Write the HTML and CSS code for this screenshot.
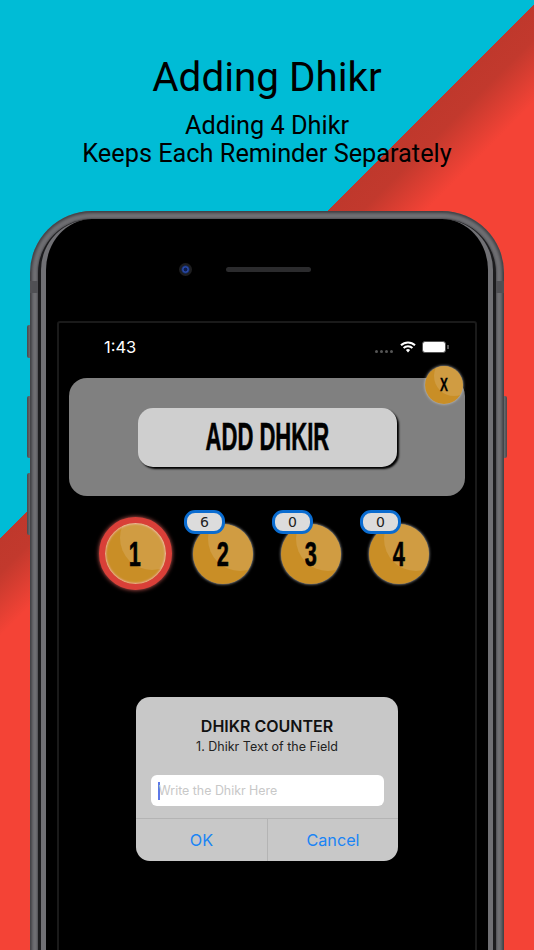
FILE: index.html
```html
<!DOCTYPE html>
<html lang="en">
<head>
<meta charset="utf-8">
<title>Adding Dhikr</title>
<link rel="stylesheet" href="styles.css">
</head>
<body>
<div class="page">
  <header class="hero">
    <h1 class="hero-title">Adding Dhikr</h1>
    <p class="hero-sub">Adding 4 Dhikr<br>Keeps Each Reminder Separately</p>
  </header>
  <div class="phone">
    <span class="side side-l1"></span>
    <span class="side side-l2"></span>
    <span class="side side-l3"></span>
    <span class="side side-r1"></span>
    <span class="band band-l"></span>
    <span class="band band-r"></span>
    <div class="phone-gap">
      <div class="phone-face">
        <div class="ear">
          <span class="camera"></span>
          <span class="speaker"></span>
        </div>
        <div class="screen">
          <div class="status">
            <span class="time">1:43</span>
            <div class="status-icons">
              <span class="dots"><i></i><i></i><i></i><i></i></span>
              <svg class="wifi" viewBox="0 0 16 12" aria-hidden="true">
                <path d="M1 4.3A10 10 0 0 1 15 4.3" />
                <path d="M3.6 7A6.3 6.3 0 0 1 12.4 7" />
                <path class="wifi-dot" d="M5.9 9.1A3 3 0 0 1 10.1 9.1L8 11.6Z" />
              </svg>
              <span class="battery"></span>
            </div>
          </div>
          <section class="panel">
            <button class="add-btn"><span class="condensed">ADD DHKIR</span></button>
            <div class="coin coin-x"><span class="condensed">X</span></div>
          </section>
          <div class="coins">
            <div class="coin coin-active"><span class="condensed">1</span></div>
            <div class="coin-wrap"><span class="badge">6</span><div class="coin"><span class="condensed">2</span></div></div>
            <div class="coin-wrap"><span class="badge">0</span><div class="coin"><span class="condensed">3</span></div></div>
            <div class="coin-wrap"><span class="badge">0</span><div class="coin"><span class="condensed">4</span></div></div>
          </div>
          <div class="dialog">
            <div class="dialog-title">DHIKR COUNTER</div>
            <div class="dialog-msg">1. Dhikr Text of the Field</div>
            <div class="field"><span class="caret"></span><span class="placeholder">Write the Dhikr Here</span></div>
            <div class="dialog-actions">
              <span class="action">OK</span>
              <span class="action">Cancel</span>
            </div>
          </div>
        </div>
      </div>
    </div>
  </div>
</div>
</body>
</html>
```
FILE: styles.css
```css
* { box-sizing: border-box; }
html, body { margin: 0; padding: 0; height: 950px; overflow: hidden; }
.page {
  width: 534px;
  height: 950px;
  overflow: hidden;
  background: linear-gradient(135deg, #00bcd6 0, #00bcd6 381px, #bf382c 381px, #c2392d 405px, #f44336 450px);
  font-family: Roboto, "Liberation Sans", sans-serif;
}
.hero { height: 211px; padding-top: 53px; text-align: center; color: #000; }
.hero-title { margin: 0; font-size: 40.4px; line-height: 50px; font-weight: 400; }
.hero-sub { margin: 9px 0 0; font-size: 25.3px; line-height: 28px; }

.phone {
  position: relative;
  width: 474px;
  height: 800px;
  margin-left: 30px;
  padding: 8px 8px 0;
  border-radius: 62px 62px 0 0;
  background: #707074;
  box-shadow: inset 0 0 3px 2px #3e3e42;
}
.side { position: absolute; width: 3px; background: linear-gradient(90deg, #47474b, #6c6c70); }
.side-l1 { left: -3px; top: 114px; height: 33px; border-radius: 2px 0 0 2px; }
.side-l2 { left: -3px; top: 185px; height: 62px; border-radius: 2px 0 0 2px; }
.side-l3 { left: -3px; top: 262px; height: 62px; border-radius: 2px 0 0 2px; }
.side-r1 { right: -3px; top: 185px; height: 62px; border-radius: 0 2px 2px 0; background: linear-gradient(90deg, #6c6c70, #47474b); }
.band { position: absolute; top: 70px; width: 8px; height: 12px; background: #505054; }
.band-l { left: 0; }
.band-r { right: 0; }

.phone-gap {
  height: 100%;
  padding: 0 3px;
  border-radius: 54px 54px 0 0;
  background: #1c1c1e;
  box-shadow: 0 0 2px 1px #505054;
}
.phone-face {
  height: 100%;
  border: solid #707074;
  border-width: 0 5px;
  border-radius: 51px 51px 0 0;
  background: #000;
}
.ear {
  height: 102px;
  display: flex;
  align-items: center;
  gap: 34px;
  padding: 0 0 1px 133px;
}
.camera {
  width: 13px;
  height: 13px;
  border-radius: 50%;
  background: radial-gradient(circle, #0d1d4a 0 1.5px, #2f52bd 2.5px, #14264f 4px, #1e1e20 4.5px);
}
.speaker { width: 85px; height: 5px; border-radius: 3px; background: #2b2b2d; }

.screen {
  width: 420px;
  height: 640px;
  margin-left: 11px;
  border: 2px solid #1a1a1a;
  border-radius: 3px;
  background: #000;
}
.status {
  height: 55px;
  display: flex;
  justify-content: space-between;
  align-items: flex-start;
  padding: 14px 29px 0 45px;
}
.time { color: #fff; font: 400 16.5px/20px Inter, Roboto, sans-serif; }
.status-icons { display: flex; align-items: flex-start; padding-top: 4px; }
.dots { display: flex; gap: 2px; margin: 9px 7px 0 0; }
.dots i { width: 3px; height: 3px; border-radius: 50%; background: #555; }
.wifi { width: 16px; height: 12px; margin-right: 6px; fill: none; stroke: #fff; stroke-width: 2; }
.wifi-dot { fill: #fff; stroke: none; }
.battery {
  position: relative;
  width: 24px;
  height: 12px;
  border: 1px solid #555;
  border-radius: 3px;
  background: #fff;
}
.battery::after {
  content: "";
  position: absolute;
  right: -4px;
  top: 3px;
  width: 2px;
  height: 4px;
  background: #555;
}

.panel {
  position: relative;
  width: 396px;
  height: 118px;
  margin-left: 10px;
  display: flex;
  align-items: center;
  justify-content: center;
  border-radius: 18px;
  background: #808080;
}
.add-btn {
  width: 259px;
  height: 59px;
  padding: 0;
  border: 0;
  border-radius: 15px;
  background: #cfcfcf;
  box-shadow: 2px 2px 2px #000;
  color: #000;
}
.condensed {
  display: inline-block;
  font-family: "Liberation Sans", sans-serif;
  font-weight: 700;
  -webkit-text-stroke: .6px #000;
}
.add-btn .condensed { font-size: 39px; line-height: 38px; transform: scaleX(.565); }

.coin {
  position: relative;
  width: 60px;
  height: 60px;
  display: flex;
  align-items: center;
  justify-content: center;
  overflow: hidden;
  border-radius: 50%;
  background: #c98e26;
  box-shadow: 0 0 3px #d0d0d0;
  color: #000;
}
.coin::after {
  content: "";
  position: absolute;
  left: 15px;
  top: -17px;
  width: 64px;
  height: 64px;
  border-radius: 50%;
  background: rgba(255, 255, 255, .13);
}
.coin .condensed { position: relative; z-index: 1; font-size: 35px; line-height: 34px; transform: scaleX(.62); }
.coin-x {
  position: absolute;
  right: 2px;
  top: -12px;
  width: 38px;
  height: 38px;
}
.coin-x::after { left: 9px; top: -10px; width: 40px; height: 40px; }
.coin-x .condensed { -webkit-text-stroke: .3px #000; }
.coin.coin-x .condensed { font-size: 18px; line-height: 20px; transform: scaleX(.66); }

.coins {
  display: grid;
  grid-template-columns: repeat(4, 88px);
  justify-items: center;
  align-items: center;
  height: 72px;
  margin-top: 21px;
  padding-left: 32px;
}
.coin-wrap { position: relative; }
.coin-active {
  width: 73px;
  height: 73px;
  border: 6px solid #d93f38;
  box-shadow: 0 0 4px #d8605a, inset 0 0 2px 1px #eeb0a0;
}
.badge {
  position: absolute;
  left: -9px;
  top: -14px;
  z-index: 2;
  width: 41px;
  height: 24px;
  border: 3px solid #0a6cd0;
  border-radius: 11px;
  background: #dcdcdc;
  color: #222;
  font: 400 14px/18px "DejaVu Sans", sans-serif;
  text-align: center;
}

.dialog {
  width: 262px;
  height: 164px;
  margin: 108px 0 0 77px;
  display: flex;
  flex-direction: column;
  align-items: center;
  border-radius: 14px;
  background: #c8c8c8;
  font-family: Inter, Roboto, sans-serif;
}
.dialog-title { margin-top: 20px; color: #111; font-size: 16px; line-height: 19px; font-weight: 600; }
.dialog-msg { margin-top: 3px; color: #222; font-size: 12.5px; line-height: 16px; }
.field {
  width: 233px;
  height: 31px;
  margin-top: 20px;
  display: flex;
  align-items: center;
  padding-left: 7px;
  border-radius: 6px;
  background: #fff;
}
.caret { width: 2px; height: 18px; background: #5d78e8; }
.placeholder { margin-left: -1px; color: #c8c8c8; font-size: 12.4px; }
.dialog-actions {
  width: 100%;
  height: 43px;
  margin-top: 12px;
  display: grid;
  grid-template-columns: 131px 131px;
  border-top: 1px solid #b4b4b4;
}
.action {
  display: flex;
  align-items: center;
  justify-content: center;
  color: #1a84f5;
  font-size: 16.2px;
}
.action + .action { border-left: 1px solid #b4b4b4; }
```
